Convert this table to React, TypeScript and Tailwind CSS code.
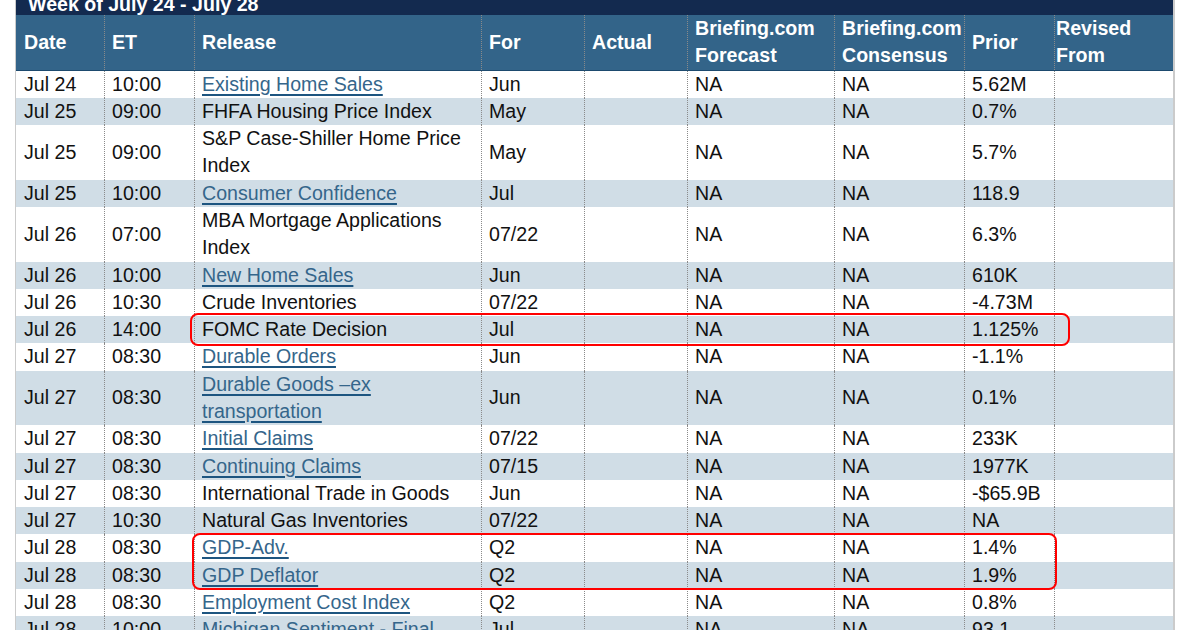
import React from 'react'

type Row = {
  date: string
  et: string
  release: string
  link?: boolean
  period: string
  prior: string
}

const ROWS: Row[] = [
  { date: 'Jul 24', et: '10:00', release: 'Existing Home Sales', link: true, period: 'Jun', prior: '5.62M' },
  { date: 'Jul 25', et: '09:00', release: 'FHFA Housing Price Index', period: 'May', prior: '0.7%' },
  { date: 'Jul 25', et: '09:00', release: 'S&P Case-Shiller Home Price Index', period: 'May', prior: '5.7%' },
  { date: 'Jul 25', et: '10:00', release: 'Consumer Confidence', link: true, period: 'Jul', prior: '118.9' },
  { date: 'Jul 26', et: '07:00', release: 'MBA Mortgage Applications Index', period: '07/22', prior: '6.3%' },
  { date: 'Jul 26', et: '10:00', release: 'New Home Sales', link: true, period: 'Jun', prior: '610K' },
  { date: 'Jul 26', et: '10:30', release: 'Crude Inventories', period: '07/22', prior: '-4.73M' },
  { date: 'Jul 26', et: '14:00', release: 'FOMC Rate Decision', period: 'Jul', prior: '1.125%' },
  { date: 'Jul 27', et: '08:30', release: 'Durable Orders', link: true, period: 'Jun', prior: '-1.1%' },
  { date: 'Jul 27', et: '08:30', release: 'Durable Goods –ex transportation', link: true, period: 'Jun', prior: '0.1%' },
  { date: 'Jul 27', et: '08:30', release: 'Initial Claims', link: true, period: '07/22', prior: '233K' },
  { date: 'Jul 27', et: '08:30', release: 'Continuing Claims', link: true, period: '07/15', prior: '1977K' },
  { date: 'Jul 27', et: '08:30', release: 'International Trade in Goods', period: 'Jun', prior: '-$65.9B' },
  { date: 'Jul 27', et: '10:30', release: 'Natural Gas Inventories', period: '07/22', prior: 'NA' },
  { date: 'Jul 28', et: '08:30', release: 'GDP-Adv.', link: true, period: 'Q2', prior: '1.4%' },
  { date: 'Jul 28', et: '08:30', release: 'GDP Deflator', link: true, period: 'Q2', prior: '1.9%' },
  { date: 'Jul 28', et: '08:30', release: 'Employment Cost Index', link: true, period: 'Q2', prior: '0.8%' },
  { date: 'Jul 28', et: '10:00', release: 'Michigan Sentiment - Final', link: true, period: 'Jul', prior: '93.1' },
]

const GRID = 'grid grid-cols-[88px_90px_287px_103px_103px_147px_130px_90px_119px]'
const CELL = 'border-l border-dotted border-[#8a8a8a] pl-[7px] flex items-center'

export default function App() {
  return (
    <div className="relative h-[630px] overflow-hidden bg-white pl-[15px] font-['Liberation_Sans',Arial,sans-serif] text-[19.6px] leading-[27.28px] text-[#111]">
      <div className="w-[1160px] border-l border-r-2 border-[#cbcbcb]">
        {/* title bar, top cut off */}
        <div className="h-[15px] overflow-hidden bg-[#132a4f]">
          <div className="-mt-[9px] pl-3 font-bold text-white">Week of July 24 - July 28</div>
        </div>

        {/* header */}
        <div className={`${GRID} border-b border-[#1d4a6e] bg-[#336489] font-bold text-white`}>
          <div className="flex items-center pl-2">Date</div>
          <div className={CELL}>ET</div>
          <div className={CELL}>Release</div>
          <div className={CELL}>For</div>
          <div className={CELL}>Actual</div>
          <div className={CELL}>Briefing.com<br />Forecast</div>
          <div className={CELL}>Briefing.com<br />Consensus</div>
          <div className={CELL}>Prior</div>
          <div className="border-l border-dotted border-[#8a8a8a] pl-[1px] flex items-center">Revised<br />From</div>
        </div>

        {/* body */}
        {ROWS.map((r, i) => (
          <div key={i} className={`${GRID} ${i % 2 === 1 ? 'bg-[#d0dde6]' : 'bg-white'}`}>
            <div className="flex items-center pl-2">{r.date}</div>
            <div className={CELL}>{r.et}</div>
            <div className={CELL}>
              {r.link ? (
                <span className="text-[#35668b] underline decoration-[#1d5580] decoration-2 underline-offset-[3px]">
                  {r.release}
                </span>
              ) : (
                <span>{r.release}</span>
              )}
            </div>
            <div className={CELL}>{r.period}</div>
            <div className={CELL}></div>
            <div className={CELL}>NA</div>
            <div className={CELL}>NA</div>
            <div className={CELL}>{r.prior}</div>
            <div className={CELL}></div>
          </div>
        ))}
      </div>

      {/* red annotation boxes */}
      <div className="absolute left-[190px] top-[313px] h-[33px] w-[880px] rounded-[8px] border-2 border-[#ff0000]" />
      <div className="absolute left-[192px] top-[533px] h-[57px] w-[865px] rounded-[8px] border-2 border-[#ff0000]" />
    </div>
  )
}
